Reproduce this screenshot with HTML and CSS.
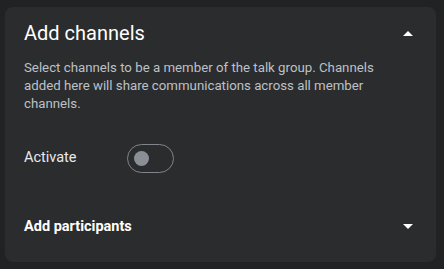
FILE: index.html
```html
<!DOCTYPE html>
<html lang="en">
<head>
<meta charset="utf-8">
<link rel="stylesheet" href="styles.css">
</head>
<body>
<section class="card">
  <header class="card-header">
    <h2 class="title">Add channels</h2>
    <svg class="caret" width="10" height="5" viewBox="0 0 10 5"><polygon points="0,5 5,0 10,5" fill="#ffffff"/></svg>
  </header>
  <p class="desc">Select channels to be a member of the talk group. Channels added here will share communications across all member channels.</p>
  <div class="row-activate">
    <span class="label">Activate</span>
    <span class="toggle"><span class="knob"></span></span>
  </div>
  <div class="row-participants">
    <span class="sub-title">Add participants</span>
    <svg class="caret" width="10" height="5" viewBox="0 0 10 5"><polygon points="0,0 10,0 5,5" fill="#ffffff"/></svg>
  </div>
</section>
</body>
</html>
```
FILE: styles.css
```css
html, body {
  margin: 0;
  height: 100%;
}
body {
  background: #212224;
  padding: 7px 8px 7px 5px;
  box-sizing: border-box;
  font-family: Roboto, "Liberation Sans", sans-serif;
}
.card {
  background: #2b2c2e;
  border-radius: 8px;
  height: 255px;
  box-sizing: border-box;
  padding: 0 23px 0 19px;
  display: flex;
  flex-direction: column;
}
.card-header {
  height: 52px;
  display: flex;
  align-items: center;
  justify-content: space-between;
  flex: none;
}
.title {
  margin: 0;
  font-size: 20px;
  font-weight: 400;
  color: #ffffff;
  line-height: 24px;
}
.caret {
  display: block;
  flex: none;
}
.desc {
  margin: 0;
  max-width: 365px;
  font-size: 13.25px;
  line-height: 18px;
  color: #bdc1c6;
}
.row-activate {
  margin-top: 31px;
  display: flex;
  align-items: center;
  height: 29px;
}
.label {
  width: 103px;
  font-size: 14.5px;
  color: #e8eaed;
  margin-top: -3px;
}
.toggle {
  width: 47px;
  height: 29px;
  border: 1px solid #80858b;
  border-radius: 15px;
  display: flex;
  align-items: center;
  padding-left: 6px;
  box-sizing: border-box;
}
.knob {
  width: 15px;
  height: 15px;
  border-radius: 50%;
  background: #8a8f96;
}
.row-participants {
  margin-top: 29px;
  height: 48px;
  display: flex;
  align-items: center;
  justify-content: space-between;
}
.sub-title {
  font-size: 14.5px;
  font-weight: 700;
  color: #ffffff;
}
```
